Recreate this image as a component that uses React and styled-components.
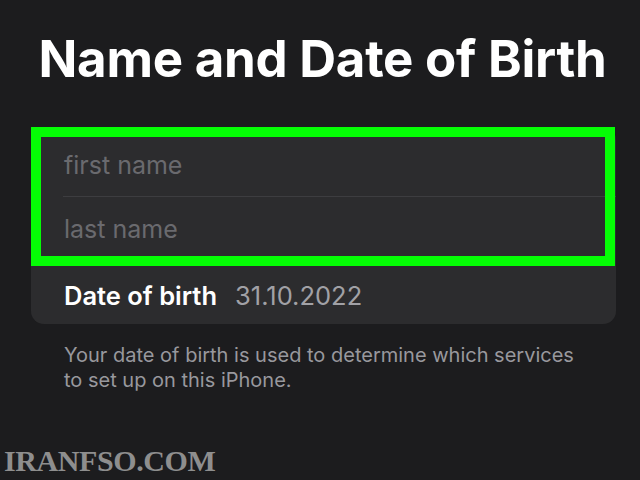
import React from 'react';
import styled, { createGlobalStyle } from 'styled-components';

const GlobalStyle = createGlobalStyle`
  html, body {
    margin: 0;
    padding: 0;
    background: #1c1c1e;
  }
  body {
    font-family: Inter, "Noto Sans", sans-serif;
  }
`;

const Page = styled.div`
  position: relative;
  width: 640px;
  height: 480px;
  overflow: hidden;
  background: #1c1c1e;
  padding-top: 29px;
  box-sizing: border-box;
`;

const Title = styled.h1`
  margin: 0 0 0 5px;
  text-align: center;
  color: #ffffff;
  font-size: 51px;
  font-weight: 700;
  line-height: 60px;
  letter-spacing: -0.25px;
`;

const Card = styled.div`
  margin: 38px 0 0 31px;
  width: 585px;
  background: #2c2c2e;
  border-radius: 13px;
`;

const NameGroup = styled.div`
  position: relative;
  padding: 10px 0;
`;

const Highlight = styled.div`
  position: absolute;
  top: 0;
  left: 0;
  right: 1px;
  bottom: 0;
  border: 10px solid #05fd05;
  pointer-events: none;
`;

const Row = styled.div`
  display: flex;
  align-items: center;
  gap: 18px;
  height: ${(p) => p.$h || 60}px;
  box-sizing: border-box;
  padding-top: ${(p) => p.$shift > 0 ? p.$shift : 0}px;
  padding-bottom: ${(p) => p.$shift < 0 ? -p.$shift : 0}px;
  border-bottom: ${(p) => (p.$divider ? '1px solid #3d3d40' : 'none')};
  margin-left: ${(p) => (p.$divider ? '32px' : '0')};
  padding-left: ${(p) => (p.$divider ? '1px' : '33px')};
`;

const Placeholder = styled.span`
  color: #6a6a6e;
  font-size: 25px;
`;

const Label = styled.span`
  color: #ffffff;
  font-size: 25.5px;
  font-weight: 600;
`;

const Value = styled.span`
  color: #a1a1a6;
  font-size: 25.5px;
`;

const Footnote = styled.p`
  margin: 19px 0 0 64px;
  width: 520px;
  color: #98989d;
  font-size: 20px;
  line-height: 25px;
`;

const Watermark = styled.div`
  position: absolute;
  left: 4px;
  bottom: 2px;
  font-family: "Liberation Serif", serif;
  font-weight: 700;
  font-size: 30px;
  color: #8e8e8e;
  letter-spacing: -0.4px;
`;

const App = () => (
  <Page>
    <GlobalStyle />
    <Title>Name and Date of Birth</Title>
    <Card>
      <NameGroup>
        <Row $divider $shift={-4}>
          <Placeholder>first name</Placeholder>
        </Row>
        <Row $h={59} $shift={4}>
          <Placeholder>last name</Placeholder>
        </Row>
        <Highlight />
      </NameGroup>
      <Row $h={58}>
        <Label>Date of birth</Label>
        <Value>31.10.2022</Value>
      </Row>
    </Card>
    <Footnote>
      Your date of birth is used to determine which services to set up on this iPhone.
    </Footnote>
    <Watermark>IRANFSO.COM</Watermark>
  </Page>
);

export default App;
